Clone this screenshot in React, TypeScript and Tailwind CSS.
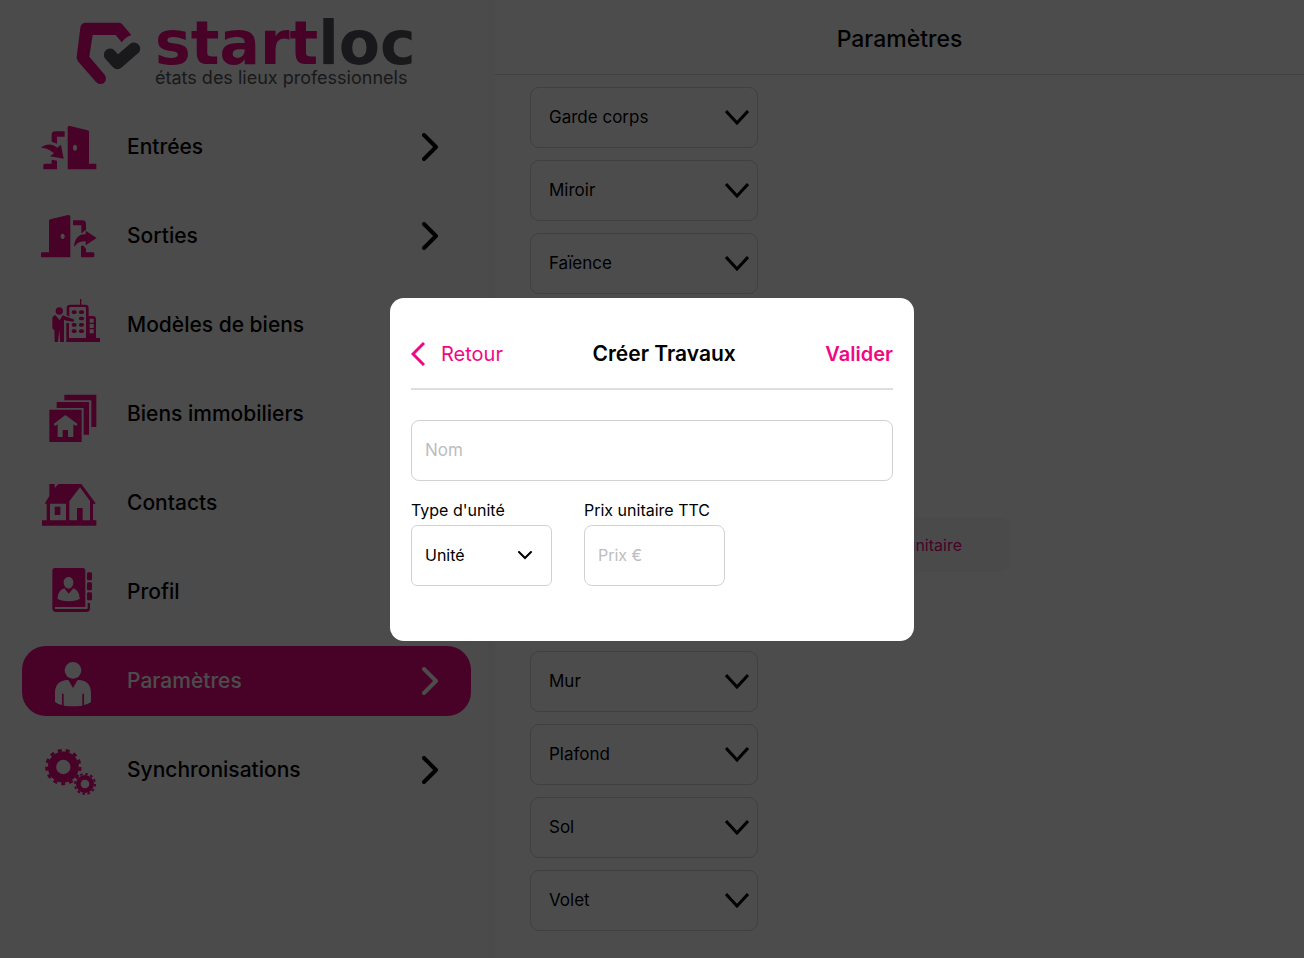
// App.tsx

import { useState, type ReactNode } from 'react';

type MenuItem = {
  label: string;
  icon: ReactNode;
  arrow?: boolean;
  active?: boolean;
};

const menu: MenuItem[] = [
  {
    label: 'Entrées',
    arrow: true,
    icon: (
      <svg viewBox="60 22 180 180" className="size-[60px]" fill="currentColor">
        <path
          fillRule="evenodd"
          d="M143 54q0-7 7-5l53 13q4 1 4 5v95h22v17h-86zM165 105c-4 0-6 4-6 9s2 9 6 9 6-4 6-9-2-9-6-9z"
        />
        <path d="M134 65v16h-23v21l-16-6V76q0-11 11-11zM70 179v-12q0-5 5-5h20v-12l16 3v26z" />
        <path d="M63 114c14-12 34-13 48 0l12-9 8 42-41-7 12-9c-10-10-23-16-39-17z" />
      </svg>
    ),
  },
  {
    label: 'Sorties',
    arrow: true,
    icon: (
      <svg viewBox="60 290 180 180" className="size-[60px]" fill="currentColor">
        <path
          fillRule="evenodd"
          d="M151 323q0-7-7-6l-53 13q-4 1-4 5v94H67q-4 0-4 4v11h88zM128 373c4 0 6 3 6 8s-2 8-6 8-6-3-6-8 2-8 6-8z"
        />
        <path d="M159 333h28q11 0 11 11v18q-7 1-11 9h-3v-23h-25zM183 411l6-3 9 10v11h20q5 0 5 4v8q0 3-4 3h-36z" />
        <path d="M162 413c1-26 16-40 35-38v-11l33 22-33 22v-12c-16-2-27 5-35 17z" />
      </svg>
    ),
  },
  {
    label: 'Modèles de biens',
    icon: (
      <svg viewBox="60 30 180 180" className="size-[60px]" fill="currentColor">
        <circle cx="118" cy="78" r="11" />
        <path d="M106 90l13 16 9-15 13 5 20 7q4 4-1 7l-20-3-8-3v67h-12l-2-37-4 37h-10l-1-37q-6 0-6-6V99q1-6 9-9z" />
        <path d="M180 42h4v18h-4z" />
        <path
          fillRule="evenodd"
          d="M140 91V69q0-10 10-10h46q10 0 10 10v24h12q10 0 10 10v56h15v12H139v-57h8v45h51V68q0-2-3-2h-44q-3 0-3 3v26zM209 101v12h12v-12zM209 117v12h12v-12zM209 133v12h12v-12z"
        />
        <rect x="155" y="76" width="15" height="11" rx="5" />
        <rect x="177" y="76" width="15" height="11" rx="5" />
        <rect x="177" y="95" width="15" height="11" rx="5" />
        <rect x="155" y="114" width="15" height="11" rx="5" />
        <rect x="177" y="114" width="15" height="11" rx="5" />
        <rect x="155" y="133" width="15" height="11" rx="5" />
        <rect x="177" y="133" width="15" height="11" rx="5" />
      </svg>
    ),
  },
  {
    label: 'Biens immobiliers',
    icon: (
      <svg viewBox="60 297 180 180" className="size-[60px]" fill="currentColor">
        <path d="M133 329h96v97h-15v-80h-81z" />
        <path d="M110 351h97v98h-16v-80h-81z" />
        <path fillRule="evenodd" d="M88 374h97v97H88zM136 390l-35 27 4 6 8-5v38h15v-21h16v21h16v-38l9 5 4-6z" />
      </svg>
    ),
  },
  {
    label: 'Contacts',
    icon: (
      <svg viewBox="60 24 180 180" className="size-[60px]" fill="currentColor">
        <path
          fillRule="evenodd"
          d="M88 57h16v12l11-12h69l43 58-4 3-4-2v50h10v16H66v-16h14v-50h-6l14-23zM90 116v50h48v-50zM148 109v57h23v-37h17v37h22v-58l-30-41z"
        />
        <path d="M104 125h17v25h-17z" />
      </svg>
    ),
  },
  {
    label: 'Profil',
    icon: (
      <svg viewBox="60 291 180 180" className="size-[60px]" fill="currentColor">
        <path
          fillRule="evenodd"
          d="M104 309h84q8 0 8 8v109h-91v6h96q2 0 2-4v-14h7v15q0 12-10 12h-92q-11 0-11-11V317q0-8 7-8zM146 336c-9 0-15 7-15 16 0 10 7 19 15 19s14-9 14-19c0-9-6-16-14-16zM133 370c-13 5-20 15-20 32 20 9 46 9 66 0 0-17-7-27-19-32l-14 16z"
        />
        <rect x="201" y="322" width="15" height="24" rx="4" />
        <rect x="201" y="352" width="15" height="24" rx="4" />
        <rect x="201" y="382" width="15" height="24" rx="4" />
      </svg>
    ),
  },
  {
    label: 'Paramètres',
    arrow: true,
    active: true,
    icon: (
      <svg viewBox="90 48 180 180" className="size-[60px]" fill="currentColor">
        <circle cx="189" cy="106" r="25" />
        <path d="M175 135l14 24 14-24c26-1 40 14 40 38v28q-10 7-21 9v-34h-5v36q-28 4-56 0v-36h-5v34q-12-2-21-9v-28c0-24 15-39 40-38z" />
      </svg>
    ),
  },
  {
    label: 'Synchronisations',
    arrow: true,
    icon: (
      <svg viewBox="90 315 180 180" className="size-[60px]" fill="none" stroke="currentColor">
        <circle cx="160" cy="396" r="34" strokeWidth="25" />
        <circle cx="160" cy="396" r="50" strokeWidth="9" pathLength="130" strokeDasharray="5 5" />
        <circle cx="225" cy="447" r="20" strokeWidth="14" />
        <circle cx="225" cy="447" r="30" strokeWidth="6" pathLength="120" strokeDasharray="5 5" />
      </svg>
    ),
  },
];

const topCategories = ['Garde corps', 'Miroir', 'Faïence'];
const bottomCategories = ['Mur', 'Plafond', 'Sol', 'Volet'];

function Logo() {
  return (
    <div className="flex h-[112px] items-start gap-3 pl-[53px] pt-5">
      <svg viewBox="45 30 204 198" className="h-[66px] w-[68px] shrink-0" fill="none" strokeLinejoin="round">
        <path
          d="M78 38h98q6 0 10 4l28 33q-17 6-29 22l-18-22H98l-10 65 46 54c8 11 3 28-13 28-7 0-11-3-15-8l-51-59q-6-7-5-15l11-87q2-15 17-15z"
          fill="#f00784"
        />
        <path d="M150 134l22 25 50-43" stroke="#54565a" strokeWidth="37" strokeLinecap="round" />
      </svg>
      <div className="flex flex-col">
        <span className="font-['DejaVu_Sans',sans-serif] text-[60px] font-bold leading-[46px] text-[#f00784]">
          start<span className="text-[#54565a]">loc</span>
        </span>
        <span className="text-lg leading-6 text-[#54565a]">états des lieux professionnels</span>
      </div>
    </div>
  );
}

function Category({ label }: { label: string }) {
  return (
    <button
      type="button"
      className="flex h-[61px] w-[228px] items-center justify-between rounded-[9px] border border-[#d5d5d5] pl-[18px] pr-2 text-[17px]"
    >
      {label}
      <svg viewBox="0 0 24 15" className="h-[15px] w-6" fill="none" stroke="currentColor" strokeWidth="3">
        <path d="M1 1l11 12L23 1" />
      </svg>
    </button>
  );
}

function CreateWorkDialog() {
  const [name, setName] = useState('');
  const [unit, setUnit] = useState('Unité');
  const [price, setPrice] = useState('');

  return (
    <div className="fixed inset-0 z-10 flex items-center justify-center bg-black/70 pb-5">
      <div
        role="dialog"
        aria-modal="true"
        aria-labelledby="dialog-title"
        className="w-full max-w-[524px] rounded-[14px] bg-white px-[21px] pb-[55px] pt-[23px]"
      >
        <div className="flex h-[69px] items-center justify-between border-b-2 border-[#dedede] text-xl">
          <button type="button" className="flex items-center gap-4 text-[#f00784]">
            <svg viewBox="0 0 14 24" className="h-6 w-3.5" fill="none" stroke="currentColor" strokeWidth="3">
              <path d="M13 1L2 12l11 11" />
            </svg>
            Retour
          </button>
          <h2 id="dialog-title" className="text-[21px] font-semibold">
            Créer Travaux
          </h2>
          <button type="button" className="font-semibold text-[#f00784]">
            Valider
          </button>
        </div>

        <input
          aria-label="Nom"
          placeholder="Nom"
          value={name}
          onChange={(e) => setName(e.target.value)}
          className="mt-[30px] block h-[61px] w-full rounded-lg border border-[#d2d2d2] px-[13px] text-[17px] placeholder:text-[#bdbdbd]"
        />

        <div className="mt-3.5 flex gap-8">
          <div className="flex w-[141px] flex-col">
            <label htmlFor="unit" className="whitespace-nowrap text-base leading-[30px]">
              Type d'unité
            </label>
            <div className="relative">
              <select
                id="unit"
                value={unit}
                onChange={(e) => setUnit(e.target.value)}
                className="h-[61px] w-full appearance-none rounded-md border border-[#d2d2d2] px-[13px] text-base"
              >
                <option>Unité</option>
              </select>
              <svg
                viewBox="0 0 14 9"
                className="pointer-events-none absolute right-5 top-[26px] h-[9px] w-3.5"
                fill="none"
                stroke="currentColor"
                strokeWidth="2"
                strokeLinecap="round"
              >
                <path d="M1 1l6 6 6-6" />
              </svg>
            </div>
          </div>
          <div className="flex w-[141px] flex-col">
            <label htmlFor="price" className="whitespace-nowrap text-base leading-[30px]">
              Prix unitaire TTC
            </label>
            <input
              id="price"
              placeholder="Prix €"
              value={price}
              onChange={(e) => setPrice(e.target.value)}
              className="h-[61px] w-full rounded-lg border border-[#d2d2d2] px-[13px] text-base placeholder:text-[#bdbdbd]"
            />
          </div>
        </div>
      </div>
    </div>
  );
}

export default function App() {
  return (
    <div className="flex min-h-screen bg-white font-[Inter,sans-serif] text-black">
      <aside className="w-[38%] max-w-[495px] shrink-0 border-r-8 border-[#f8f8f8] bg-[#fafafa] pl-[22px] pr-4">
        <Logo />
        <nav className="flex flex-col gap-[19px]">
          {menu.map((item) => (
            <a
              key={item.label}
              href="#"
              className={
                item.active
                  ? 'flex h-[70px] items-center rounded-3xl bg-[#f00784] pl-[18px] pr-8 text-[21px] font-medium text-white'
                  : 'flex h-[70px] items-center rounded-3xl bg-[#fcfcfc] pl-[18px] pr-8 text-[21px] font-medium'
              }
            >
              <span className={item.active ? 'text-white' : 'text-[#f00784]'}>{item.icon}</span>
              <span className="ml-[27px] flex-1">{item.label}</span>
              {item.arrow && (
                <svg
                  viewBox="0 0 17 28"
                  className="h-7 w-[17px]"
                  fill="none"
                  stroke="currentColor"
                  strokeWidth="4"
                  strokeLinecap="round"
                  strokeLinejoin="round"
                >
                  <path d="M2 2l12 12L2 26" />
                </svg>
              )}
            </a>
          ))}
        </nav>
      </aside>

      <main className="flex-1">
        <header className="flex h-[75px] items-center justify-center border-b border-[#d5d5d5] pt-1">
          <h1 className="text-[23px] font-medium">Paramètres</h1>
        </header>
        <div className="flex flex-col gap-3 pb-7 pl-[35px] pt-3">
          {topCategories.map((label) => (
            <Category key={label} label={label} />
          ))}
          <section className="h-[333px] pt-[211px]">
            <div className="flex h-[55px] w-[480px] items-center justify-end rounded-[10px] bg-[#f8f8f8] pr-12 text-base text-[#f00784]">
              Prix unitaire
            </div>
          </section>
          {bottomCategories.map((label) => (
            <Category key={label} label={label} />
          ))}
        </div>
      </main>

      <CreateWorkDialog />
    </div>
  );
}
